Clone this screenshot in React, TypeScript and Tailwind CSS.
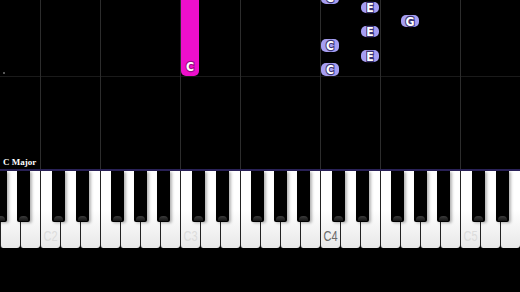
const WHITE_W = 20;
const FIRST_C = 40; // x of C2
const OCTAVE = 140;
const BLACK_OFFSETS = [12, 36, 71, 94, 117];

// A1 .. E5 → 26 white keys
const whiteKeys = Array.from({ length: 26 }, (_, i) => {
  const idx = i - 2; // 0 = C2
  const octave = 2 + Math.floor(idx / 7);
  const isC = ((idx % 7) + 7) % 7 === 0;
  return { x: i * WHITE_W, label: isC ? `C${octave}` : null };
});

const blackKeys: number[] = [];
for (let o = -1; o <= 3; o++) {
  for (const off of BLACK_OFFSETS) {
    const x = FIRST_C + o * OCTAVE + off;
    if (x > -13 && x < 520) blackKeys.push(x);
  }
}

const gridLines = [40, 100, 180, 240, 320, 380, 460];

interface Note {
  x: number;
  y: number;
  h: number;
  label: string;
  active?: boolean;
}

const notes: Note[] = [
  { x: 181, y: -6, h: 82, label: "C", active: true },
  { x: 321, y: -9, h: 13, label: "C" },
  { x: 321, y: 39, h: 13, label: "C" },
  { x: 321, y: 63, h: 13, label: "C" },
  { x: 361, y: 2, h: 11, label: "E" },
  { x: 361, y: 26, h: 11, label: "E" },
  { x: 361, y: 50, h: 12, label: "E" },
  { x: 401, y: 15, h: 12, label: "G" },
];

export default function App() {
  return (
    <main className="w-[520px] h-[292px] bg-black overflow-hidden flex flex-col">
      {/* note roll */}
      <div className="relative h-[169px] shrink-0">
        <div className="absolute left-0 right-0 top-[76px] h-px bg-[#1a1a1a]" />
        {gridLines.map((x) => (
          <div key={x} className="absolute top-0 bottom-0 w-px bg-[#2c2c2c]" style={{ left: x }} />
        ))}
        <div className="absolute left-[3px] top-[72px] w-[2px] h-[2px] bg-[#555]" />

        {notes.map((n, i) => (
          <div
            key={i}
            className={`absolute w-[18px] flex justify-center ${
              n.active ? "bg-[#ee0fcb] rounded-b-[5px] items-end pb-[4px]" : "bg-[#a69ef2] rounded-[5px] items-center"
            }`}
            style={{ left: n.x, top: n.y, height: n.h }}
          >
            <span
              className={`font-['DejaVu_Sans',sans-serif] font-bold text-[11px] leading-none text-white scale-y-[1.15] [paint-order:stroke_fill] ${
                n.active ? "[-webkit-text-stroke:2px_#9a0a85]" : "[-webkit-text-stroke:2px_#3a3370]"
              }`}
            >
              {n.label}
            </span>
          </div>
        ))}

        <span className="absolute left-[3px] bottom-[2px] font-['Liberation_Serif',serif] font-bold text-[9px] leading-none text-white">
          C Major
        </span>
      </div>

      {/* keyboard top border */}
      <div className="h-[2px] shrink-0 bg-[#2a2258]" />

      {/* keyboard */}
      <div className="relative h-[77px] shrink-0 flex">
        {whiteKeys.map((k) => (
          <div
            key={k.x}
            className="w-[20px] h-full shrink-0 border-l border-[#222] bg-gradient-to-b from-white via-white to-[#e8e8e8] rounded-b-[3px] flex items-end justify-center pb-[4px]"
          >
            {k.label && (
              <span
                className={`font-['Liberation_Sans',sans-serif] text-[11px] leading-none scale-y-[1.4] origin-bottom ${
                  k.label === "C4" ? "text-[#6a6a6a]" : "text-[#dcdcdc]"
                }`}
              >
                {k.label}
              </span>
            )}
          </div>
        ))}
        {blackKeys.map((x) => (
          <div
            key={x}
            className="absolute top-0 w-[13px] h-[51px] bg-black rounded-b-[2px] shadow-[2px_1px_3px_rgba(0,0,0,0.3)]"
            style={{ left: x }}
          >
            <div className="absolute left-[2px] right-[2px] bottom-[1px] h-[5px] rounded-t-[4px] bg-gradient-to-b from-[#3c3c3c] to-[#151515]" />
          </div>
        ))}
      </div>
    </main>
  );
}
